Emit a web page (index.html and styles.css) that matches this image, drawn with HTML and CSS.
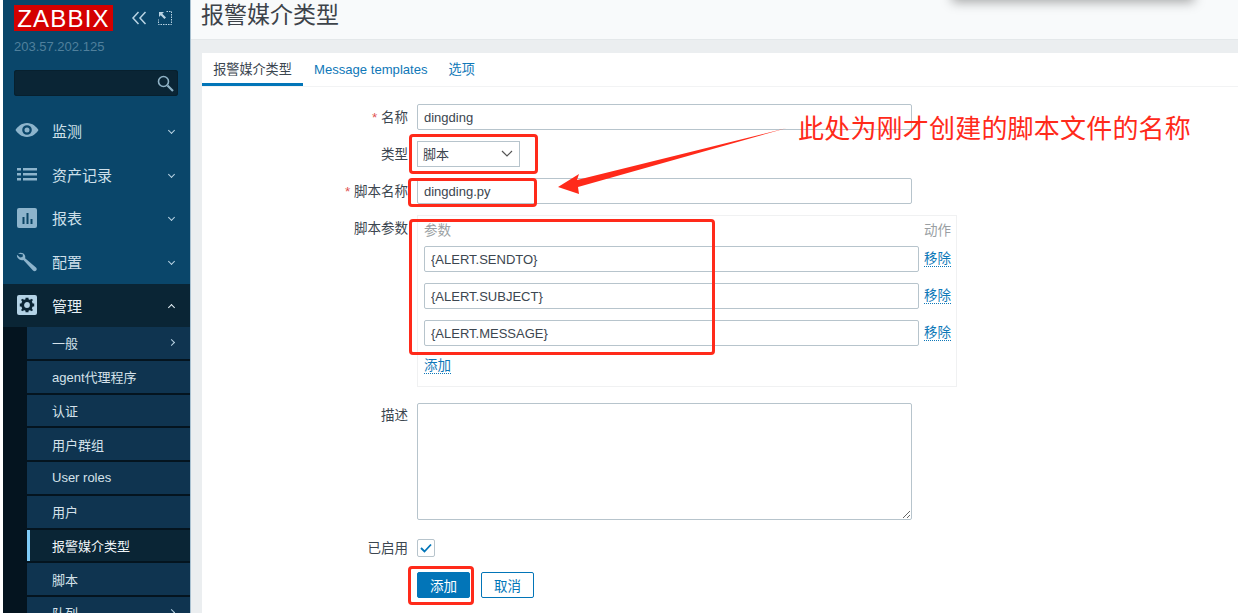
FILE: index.html
```html
<!DOCTYPE html>
<html lang="zh-CN">
<head>
    <meta charset="UTF-8">
    <meta name="viewport" content="width=device-width, initial-scale=1.0">
    <title>报警媒介类型</title>
    <link rel="stylesheet" href="styles.css">
</head>
<body>
    <aside class="sidebar">
        <div class="logo-row">
            <div class="logo">ZABBIX</div>
            <svg class="logo-icon" width="16" height="14" viewBox="0 0 16 14"><path d="M7.500 1 2 7l5.500 6M14.500 1 9 7l5.500 6" fill="none" stroke="#b9d3e3" stroke-width="1.500"/></svg>
            <svg class="logo-icon expand" width="14" height="14" viewBox="0 0 14 14"><path d="M1 1h5L4.300 2.700 8 6.400 6.400 8 2.700 4.300 1 6z" fill="#b9d3e3"/><path d="M8.500.5h5v13H.5V8.500" fill="none" stroke="#b9d3e3" stroke-dasharray="1.500 1"/></svg>
        </div>
        <div class="server-ip">203.57.202.125</div>
        <div class="search">
            <svg width="17" height="17" viewBox="0 0 17 17"><circle cx="6.500" cy="6.500" r="5" fill="none" stroke="#8fb2c6" stroke-width="1.600"/><path d="m10.500 10.500 5.500 5.500" stroke="#8fb2c6" stroke-width="2.200"/></svg>
        </div>
        <nav class="menu">
            <a class="menu-item">
                <svg width="24" height="16" viewBox="0 0 24 16"><path fill-rule="evenodd" d="M12 1c5.500 0 9.500 3.800 11.500 7-2 3.200-6 7-11.500 7S2.500 11.200.5 8C2.500 4.800 6.500 1 12 1zm0 2.200a4.800 4.800 0 1 0 0 9.600 4.800 4.800 0 0 0 0-9.600zm0 2.300a2.500 2.500 0 1 1 0 5 2.500 2.500 0 0 1 0-5z" fill="#8db4cc"/></svg>
                <span>监测</span><i class="chev down"></i>
            </a>
            <a class="menu-item">
                <svg width="24" height="16" viewBox="0 0 24 16"><path d="M2 2h4v2.500H2zM8 2h14v2.500H8zM2 7h4v2.500H2zM8 7h14v2.500H8zM2 12h4v2.500H2zM8 12h14v2.500H8z" fill="#8db4cc"/></svg>
                <span>资产记录</span><i class="chev down"></i>
            </a>
            <a class="menu-item">
                <svg width="24" height="20" viewBox="0 0 24 20"><rect x="2" width="20" height="20" rx="2" fill="#8db4cc"/><path d="M7.500 9h2v7h-2zM11.500 5h2v11h-2zM15.500 11h2v5h-2z" fill="#0b4565"/></svg>
                <span>报表</span><i class="chev down"></i>
            </a>
            <a class="menu-item">
                <svg width="24" height="20" viewBox="0 0 24 20"><path d="M3 1.500c2.500-1.300 5.500-.6 6.700 1.500.6 1.100.7 2.200.4 3.300L21 15.500c1 1 .9 2.300.1 3.100-.9.900-2.200.8-3.100-.2L8.400 8C6.500 8.500 4.400 8 3 6.300 2 5 1.800 3.600 2 2.700L5 5.500l2.500-.6.500-2.300z" fill="#8db4cc"/></svg>
                <span>配置</span><i class="chev down"></i>
            </a>
            <a class="menu-item open">
                <svg width="24" height="20" viewBox="0 0 24 20"><rect x="2" width="20" height="20" rx="2" fill="#b4d3e6"/><circle cx="12" cy="10" r="4.400" fill="none" stroke="#0a2535" stroke-width="3"/><path d="M10.500 2.800h3v3h-3zM10.500 14.200h3v3h-3zM4.800 8.500h3v3h-3zM16.200 8.500h3v3h-3zM6 4.800 8 3.800l1.500 2-1.800 1.700zM18 4.800 16 3.800l-1.500 2 1.800 1.700zM6 15.200l2 1 1.500-2-1.800-1.700zM18 15.200l-2 1-1.500-2 1.800-1.700z" fill="#0a2535"/></svg>
                <span>管理</span><i class="chev up"></i>
            </a>
            <div class="submenu">
                <a class="sub-item">一般<i class="chev right"></i></a>
                <a class="sub-item">agent代理程序</a>
                <a class="sub-item">认证</a>
                <a class="sub-item">用户群组</a>
                <a class="sub-item">User roles</a>
                <a class="sub-item">用户</a>
                <a class="sub-item selected">报警媒介类型</a>
                <a class="sub-item">脚本</a>
                <a class="sub-item">队列<i class="chev right"></i></a>
            </div>
        </nav>
    </aside>

    <main class="main">
        <header class="page-header">
            <h1>报警媒介类型</h1>
        </header>
        <section class="card">
            <div class="tabs">
                <a class="tab active">报警媒介类型</a>
                <a class="tab">Message templates</a>
                <a class="tab">选项</a>
            </div>
            <form class="media-form">
                <div class="form-row">
                    <label class="required">名称</label>
                    <input class="text-input" type="text" value="dingding">
                </div>
                <div class="form-row">
                    <label>类型</label>
                    <div class="select-box">脚本
                        <svg width="12" height="7" viewBox="0 0 12 7"><path d="m1 1 5 5 5-5" fill="none" stroke="#555" stroke-width="1.200"/></svg>
                    </div>
                </div>
                <div class="form-row">
                    <label class="required">脚本名称</label>
                    <input class="text-input" type="text" value="dingding.py">
                </div>
                <div class="form-row">
                    <label>脚本参数</label>
                    <div class="params">
                        <div class="params-head"><span>参数</span><span>动作</span></div>
                        <div class="param-row">
                            <input class="text-input" type="text" value="{ALERT.SENDTO}"><a class="link">移除</a>
                        </div>
                        <div class="param-row">
                            <input class="text-input" type="text" value="{ALERT.SUBJECT}"><a class="link">移除</a>
                        </div>
                        <div class="param-row">
                            <input class="text-input" type="text" value="{ALERT.MESSAGE}"><a class="link">移除</a>
                        </div>
                        <a class="link add-link">添加</a>
                    </div>
                </div>
                <div class="form-row">
                    <label class="label-desc">描述</label>
                    <textarea class="text-area"></textarea>
                </div>
                <div class="form-row row-check">
                    <label>已启用</label>
                    <span class="checkbox">
                        <svg width="12" height="10" viewBox="0 0 12 10"><path d="m1 5 3.500 3.500L11 1.500" fill="none" stroke="#0275b8" stroke-width="1.800"/></svg>
                    </span>
                </div>
                <div class="form-row row-buttons">
                    <button class="btn primary" type="button">添加</button>
                    <button class="btn" type="button">取消</button>
                </div>
            </form>
        </section>
    </main>

    <!-- screenshot annotations -->
    <div class="popup-shadow"></div>
    <div class="mark mark-select"></div>
    <div class="mark mark-script"></div>
    <div class="mark mark-params"></div>
    <div class="mark mark-add"></div>
    <svg class="note-arrow" width="250" height="80" viewBox="0 0 250 80"><path d="M237 2 27 54l2-6L8 61l21 7-1-7z" fill="#ff2a1a"/></svg>
    <div class="note-text">此处为刚才创建的脚本文件的名称</div>
</body>
</html>
```

FILE: styles.css
```css
html, body {
    height: 100%;
    margin: 0;
}
body {
    display: flex;
    height: 613px;
    overflow: hidden;
    padding-left: 3px;
    box-sizing: border-box;
    background-color: #fff;
    font-family: "Liberation Sans", Arial, "Noto Sans CJK SC", sans-serif;
    font-size: 13px;
    color: #3c4650;
}

/* sidebar */
.sidebar {
    width: 187px;
    flex-shrink: 0;
    background-color: #0a466a;
    border-right: 1px solid #a9c1d1;
    overflow: hidden;
}
.logo-row {
    display: flex;
    align-items: center;
    padding: 5px 0 0 11px;
}
.logo {
    width: 99px;
    height: 26px;
    background-color: #d40000;
    color: #fff;
    font-size: 24px;
    line-height: 27px;
    text-align: center;
    letter-spacing: 1.2px;
}
.logo-icon {
    margin-left: 18px;
}
.logo-icon.expand {
    margin-left: 11px;
}
.server-ip {
    margin: 8px 0 0 11px;
    font-size: 13px;
    line-height: 16px;
    color: #50809c;
}
.search {
    display: flex;
    align-items: center;
    justify-content: flex-end;
    height: 26px;
    margin: 15px 12px 0 11px;
    padding-right: 4px;
    background-color: #0a2535;
    border-radius: 3px;
    box-shadow: inset 0 0 0 1px #07202e;
}
.menu {
    margin-top: 12.500px;
}
.menu-item {
    display: flex;
    align-items: center;
    height: 43.750px;
    padding-left: 12px;
    font-size: 15px;
    color: #cfe0ea;
}
.menu-item span {
    margin-left: 13px;
    flex: 1;
}
.menu-item.open {
    height: 43.500px;
    background-color: #0a2535;
    color: #e6f0f6;
}
.chev {
    width: 4px;
    height: 4px;
    margin-right: 16px;
    border-right: 1px solid #b9d3e3;
    border-bottom: 1px solid #b9d3e3;
    flex-shrink: 0;
}
.chev.down {
    transform: rotate(45deg);
}
.chev.up {
    margin-top: 4px;
    border-color: #e6f0f6;
    transform: rotate(225deg);
}
.chev.right {
    margin-left: auto;
    transform: rotate(-45deg);
}
.submenu {
    margin-left: 24px;
    box-shadow: -24px 0 0 #04141f;
    background-color: #04141f;
}
.sub-item {
    display: flex;
    align-items: center;
    height: 31.750px;
    margin-bottom: 2px;
    padding-left: 25px;
    background-color: #0f3450;
    font-size: 13px;
    color: #d5e2ea;
}
.sub-item.selected {
    padding-left: 22px;
    background-color: #0a2535;
    border-left: 3px solid #7fcbf7;
    color: #f0f5f8;
}

/* main */
.main {
    flex: 1;
    min-width: 0;
    background-color: #ebeef0;
}
.page-header {
    height: 40px;
    padding-left: 10px;
    background-color: #f8fafb;
    border-bottom: 1px solid #e4e8ea;
    box-sizing: border-box;
}
.page-header h1 {
    margin: 0;
    font-size: 23px;
    font-weight: normal;
    line-height: 31px;
    color: #3d434a;
}
.card {
    margin: 13px 0 0 11px;
    height: 560px;
    background-color: #fff;
}
.tabs {
    display: flex;
    height: 34px;
    border-bottom: 1px solid #f2f3f4;
    box-sizing: border-box;
}
.tab {
    padding: 8px 0 0;
    margin-left: 21px;
    font-size: 13.100px;
    line-height: 17px;
    color: #0f78b8;
}
.tab.active {
    width: 101px;
    margin: 0 -10px 0 0;
    text-align: center;
    border-bottom: 3px solid #0275b8;
    color: #3c4650;
}

/* form */
.media-form {
    padding-top: 17px;
}
.form-row {
    display: flex;
    margin-bottom: 11px;
}
.form-row label {
    width: 206px;
    height: 26px;
    margin-right: 9px;
    text-align: right;
    font-size: 13.500px;
    line-height: 28px;
    flex-shrink: 0;
}
.form-row .label-desc {
    padding-top: 4px;
}
.required::before {
    content: "* ";
    color: #e05050;
}
.text-input {
    width: 495px;
    height: 26px;
    padding: 0 6px;
    border: 1px solid #b7c4cc;
    border-radius: 2px;
    box-sizing: border-box;
    font: inherit;
    color: #3c4650;
    background-color: #fff;
    flex-shrink: 0;
}
.select-box {
    display: flex;
    align-items: center;
    justify-content: space-between;
    width: 103px;
    height: 26px;
    padding: 0 6px 2px 5px;
    border: 1px solid #b7c4cc;
    box-sizing: border-box;
}
.params {
    width: 540px;
    height: 172px;
    padding: 6px 5px 0 6px;
    border: 1px solid #f0f1f2;
    box-sizing: border-box;
}
.params-head {
    display: flex;
    justify-content: space-between;
    font-size: 13.500px;
    line-height: 17px;
    color: #9a9fa3;
}
.param-row {
    display: flex;
    align-items: center;
    margin-top: 11px;
}
.params-head + .param-row {
    margin-top: 7px;
}
.param-row .text-input {
    margin-right: 5px;
}
.link {
    font-size: 13.500px;
    line-height: 15px;
    white-space: nowrap;
    color: #0f78b8;
    border-bottom: 1px dotted #0f78b8;
}
.add-link {
    display: inline-block;
    margin-top: 12px;
}
.text-area {
    display: block;
    width: 495px;
    height: 117px;
    margin: 5px 0 0;
    border: 1px solid #b7c4cc;
    border-radius: 2px;
    box-sizing: border-box;
}
.row-check {
    align-items: center;
    height: 18px;
    margin: 19px 0 15px;
}
.checkbox {
    display: flex;
    align-items: center;
    justify-content: center;
    width: 18px;
    height: 18px;
    border: 1px solid #b7c4cc;
    border-radius: 2px;
    box-sizing: border-box;
}
.row-buttons {
    padding-left: 215px;
    gap: 11px;
}
.btn {
    width: 53px;
    height: 26px;
    padding: 0;
    border: 1px solid #0275b8;
    border-radius: 2px;
    background-color: #fff;
    color: #0275b8;
    font: inherit;
    font-size: 13.500px;
}
.btn.primary {
    background-color: #0275b8;
    color: #fff;
}

/* annotations on top of the screenshot */
.popup-shadow {
    position: absolute;
    left: 952px;
    top: -20px;
    width: 242px;
    height: 20px;
    box-shadow: 0 2px 12px rgba(0, 0, 0, 0.35);
}
.mark {
    position: absolute;
    border: 3px solid #ff2a1a;
    border-radius: 4px;
    box-sizing: border-box;
}
.mark-select {
    left: 409px;
    top: 134px;
    width: 129px;
    height: 40px;
}
.mark-script {
    left: 408px;
    top: 178px;
    width: 129px;
    height: 29px;
}
.mark-params {
    left: 409px;
    top: 219px;
    width: 306px;
    height: 136px;
}
.mark-add {
    left: 408px;
    top: 566px;
    width: 66px;
    height: 39px;
}
.note-arrow {
    position: absolute;
    left: 550px;
    top: 126px;
}
.note-text {
    position: absolute;
    left: 798px;
    top: 108px;
    font-family: "Noto Sans CJK SC", sans-serif;
    font-size: 26px;
    letter-spacing: 0.2px;
    line-height: 38px;
    color: #ff2a1a;
    white-space: nowrap;
}
```
